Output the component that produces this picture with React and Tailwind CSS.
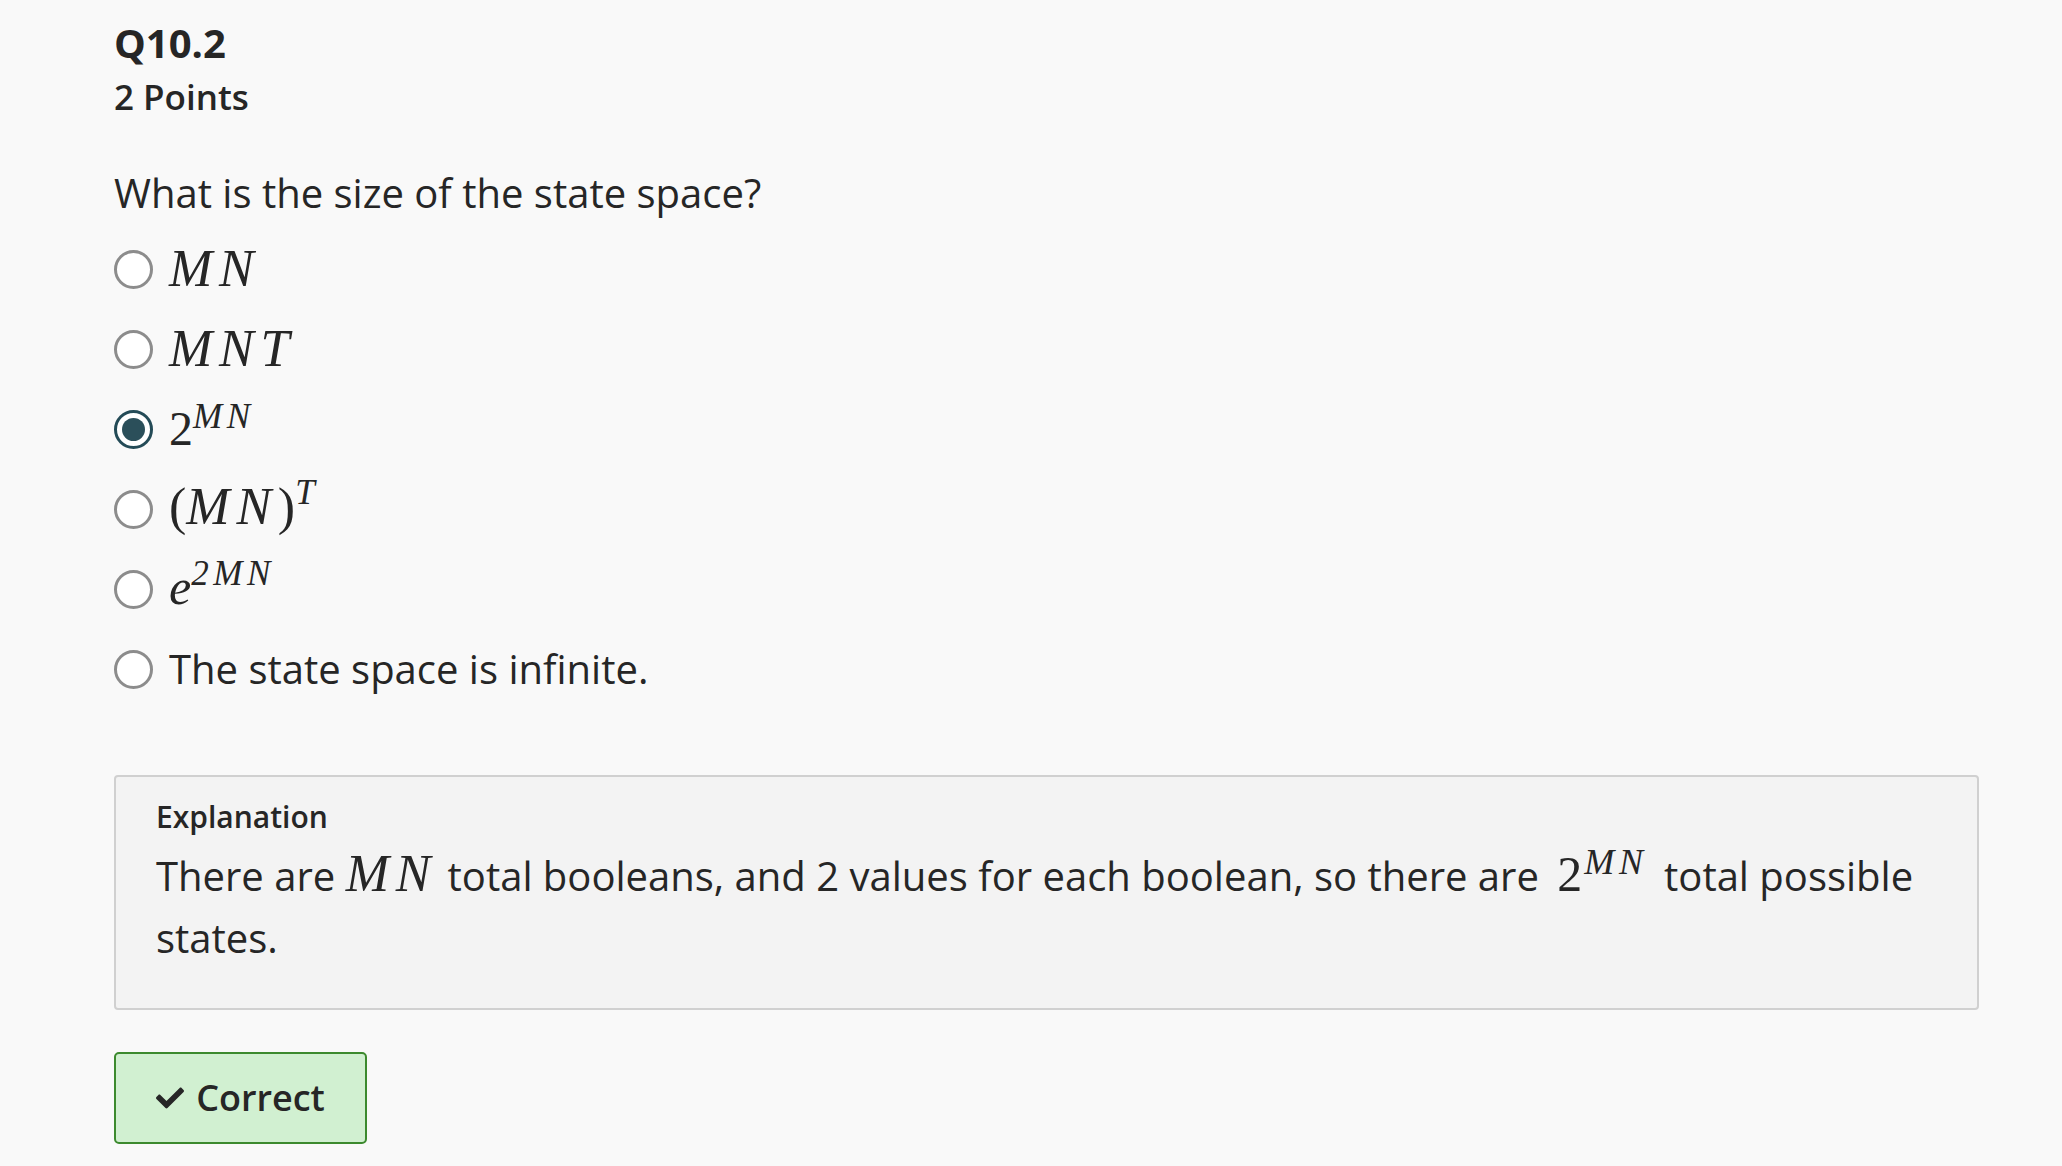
import { FaCheck } from "react-icons/fa";

const sans = { fontFamily: '"Open Sans", "Noto Sans", sans-serif' };
const serif = { fontFamily: '"Liberation Serif", "Times New Roman", serif' };

function M({ children, className = "" }) {
  return (
    <span className={"italic tracking-[0.13em] " + className} style={serif}>
      {children}
    </span>
  );
}

function Sup({ base, sup, italicBase }) {
  return (
    <span className="inline-flex items-start leading-none">
      {italicBase ? <M className="text-[50px] tracking-normal">{base}</M> : (
        <span className="text-[48px]" style={serif}>{base}</span>
      )}
      <M className="text-[35px] -mt-[6px]">{sup}</M>
    </span>
  );
}

function Radio({ checked }) {
  if (checked) {
    return (
      <span className="flex h-[39px] w-[39px] shrink-0 items-center justify-center rounded-full border-[3px] border-[#244b57] bg-white">
        <span className="h-[23px] w-[23px] rounded-full bg-[#2b4f5a]" />
      </span>
    );
  }
  return <span className="h-[39px] w-[39px] shrink-0 rounded-full border-[3px] border-[#8c8c8c] bg-white" />;
}

const options = [
  { key: "mn", label: <M className="text-[52px] leading-none">MN</M> },
  { key: "mnt", label: <M className="text-[52px] leading-none">MNT</M> },
  { key: "2mn", checked: true, label: <Sup base="2" sup="MN" /> },
  {
    key: "mnt2",
    label: (
      <span className="-mt-[4px] inline-flex items-start leading-none">
        <span className="text-[52px]" style={serif}>(</span>
        <M className="text-[52px]">MN</M>
        <span className="text-[52px]" style={serif}>)</span>
        <M className="text-[35px] -mt-[6px]">T</M>
      </span>
    ),
  },
  { key: "e", label: <span className="-mt-[4px]"><Sup base="e" sup="2MN" italicBase /></span> },
  { key: "inf", label: <span className="text-[40px]">The state space is infinite.</span> },
];

export default function App() {
  return (
    <div className="min-h-[1166px] bg-[#f9f9f9] pl-[114px] pt-[19px] text-[#262626]" style={sans}>
      <div className="text-[40px] font-bold leading-[48px]">Q10.2</div>
      <div className="mt-[8px] text-[35px] font-semibold leading-[44px]">2 Points</div>

      <div className="mt-[44px] text-[40px] leading-[60px]">What is the size of the state space?</div>

      <div className="mt-[6px] flex flex-col">
        {options.map((o) => (
          <div key={o.key} className="flex h-[80px] items-center gap-[16px]">
            <Radio checked={o.checked} />
            {o.label}
          </div>
        ))}
      </div>

      <div className="mt-[66px] mr-[83px] rounded-[4px] border-2 border-[#d0d0d0] bg-[#f3f3f3] px-[40px] pt-[19px] pb-[39px]">
        <div className="text-[30px] font-semibold leading-[42px]">Explanation</div>
        <div className="mt-[7px] text-[40px] leading-[62px]">
          There are <M className="text-[52px] leading-[0]">MN</M> total booleans, and 2 values for each boolean, so there are{" "}
          <span style={serif} className="ml-[8px] text-[50px] leading-[0]">2</span>
          <M className="ml-[2px] mr-[6px] align-[17px] text-[36px] leading-[0]">MN</M> total possible states.
        </div>
      </div>

      <div className="mt-[42px] flex h-[92px] w-[253px] items-center justify-center gap-[12px] rounded-[5px] border-2 border-[#3c8a2e] bg-[#d1f0d1]">
        <FaCheck className="h-[28px] w-[28px] text-[#262626]" />
        <span className="text-[36px] font-semibold">Correct</span>
      </div>
    </div>
  );
}
